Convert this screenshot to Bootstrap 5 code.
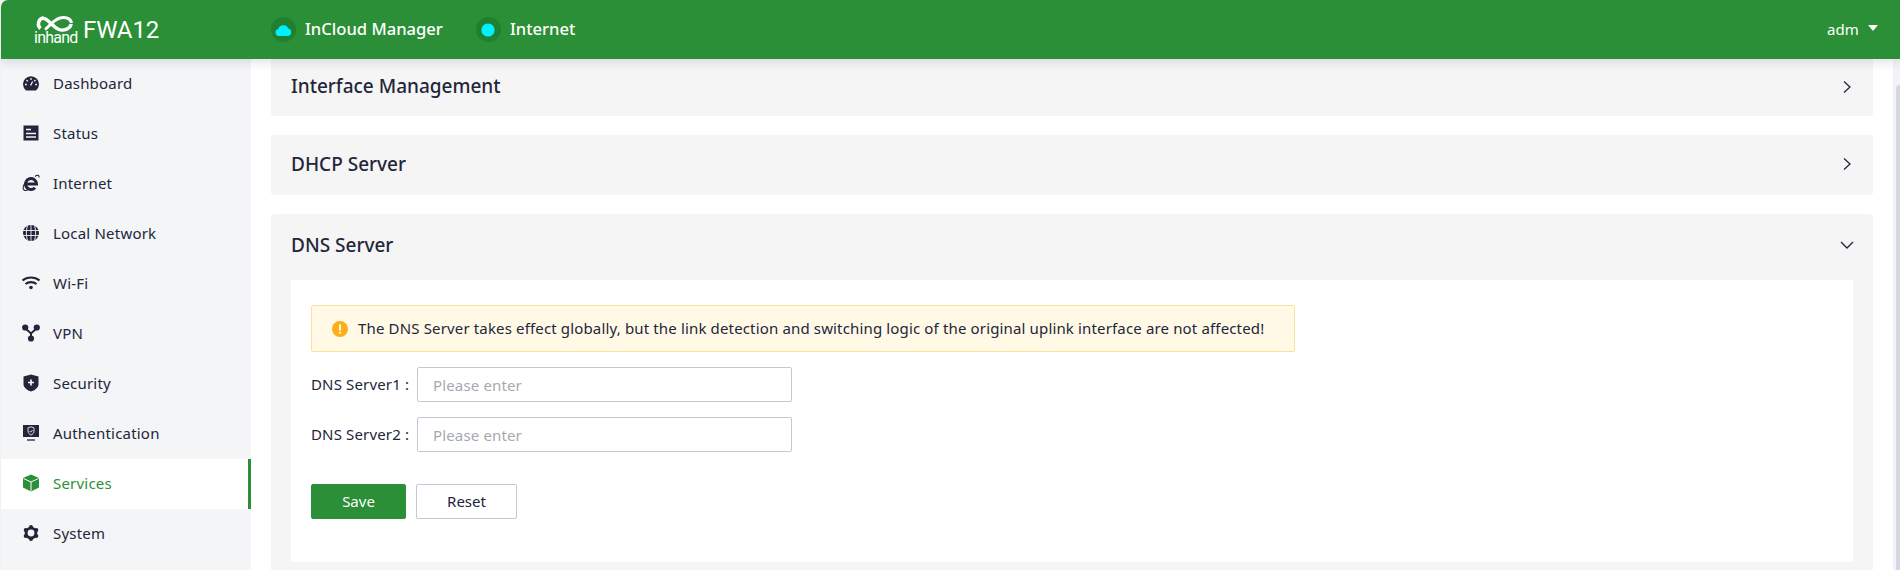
<!DOCTYPE html>
<html lang="en">
<head>
<meta charset="utf-8">
<title>FWA12</title>
<link href="https://cdn.jsdelivr.net/npm/bootstrap@5.3.0/dist/css/bootstrap.min.css" rel="stylesheet">
<style>
html,body{height:570px;overflow:hidden}
body{background:#f1f1f2;font-family:"Noto Sans","Open Sans",sans-serif;font-size:15px;letter-spacing:.15px;color:#23263a}
.app-shell{margin-left:1px;height:570px;background:#fff;border-top-left-radius:7px;overflow:hidden}
.top-bar{height:59px;padding:0;background:#2a8f36;color:#fff;box-shadow:0 2px 10px rgba(40,40,60,.16);position:relative;z-index:2;flex-wrap:nowrap}
.brand-area{width:270px;padding-left:33px}
.logo-mark{width:43px}
.logo-word{display:block;font:400 16px/12px "Roboto",sans-serif;letter-spacing:-.75px;margin-top:-2px;white-space:nowrap}
.model-name{font:400 24px/1 "Roboto",sans-serif;margin-left:6px;letter-spacing:-.1px}
.state-dot{width:25px;height:25px;border-radius:50%;background:#1f8030}
.state-text{font-size:16.6px;font-weight:500;margin-left:9px;margin-right:33px;letter-spacing:0}
.user-menu{margin-right:22px;font-size:15px;color:#fff}
.user-caret{width:0;height:0;border:5px solid transparent;border-top:6px solid #fff;border-bottom:0;margin-left:9px;margin-top:-3px}
.body-row{height:511px}
.side-menu{width:250px;background:#f4f5f7;flex:none}
.side-menu .nav-link{height:50px;padding:0 0 2px 52px;color:#23263a;font-size:15px;letter-spacing:.2px;position:relative}
.side-menu .nav-link.active{background:#fff;color:#2a8f36;border-right:3px solid #2a8f36}
.side-icon{position:absolute;left:21px;top:50%;width:18px;height:18px;margin-top:-10px;fill:#23263a}
.nav-link.active .side-icon{fill:#2a8f36}
.content-area{padding:0 20px}
.fold-panel{background:#f5f5f5;border-radius:3px}
.fold-head{height:60px;padding:0 20px 2px;font-size:19px;font-weight:500;letter-spacing:0}
.fold-first{height:57px;margin-bottom:19px}
.fold-first .fold-head{height:57px}
.fold-second{margin-bottom:19px}
.fold-open{height:360px}
.fold-open .fold-head{height:66px;padding-bottom:4px}
.fold-arrow{width:14px;height:14px;stroke:#23263a;fill:none;stroke-width:1.3;margin-right:-1px}
.fold-body{margin:0 20px;height:282px;background:#fff;padding:25px 20px}
.warn-box{width:984px;height:47px;padding:0 0 0 20px;margin:0 0 15px;background:#fff9e6;border:1px solid #fbe29c;border-radius:2px;color:#23263a;font-size:15px}
.warn-icon{width:16px;height:16px;margin-right:10px;flex:none}
.field-row{height:35px;margin-bottom:15px}
.field-label{width:106px;flex:none}
.field-input{width:375px;height:35px;padding:0 15px;font-size:15px;letter-spacing:.15px;border:1px solid #c4c8d6;border-radius:2px;color:#23263a}
.field-input::placeholder{color:#a6a9b1}
.action-row{margin-top:32px;gap:10px}
.btn-save,.btn-reset{height:35px;padding:0;font-size:15px;border-radius:2px}
.btn-save{width:95px;background:#2a8f36;border:1px solid #2a8f36;color:#fff}
.btn-reset{width:101px;background:#fff;border:1px solid #c4c8d6;color:#23263a}
.scroll-rail{width:7px;flex:none;background:#f2f3f7;padding:26px 0 0 3px}
.scroll-thumb{height:100%;background:#d5d7e3;border-top-left-radius:4px}
</style>
</head>
<body>
<div class="app-shell d-flex flex-column">
  <nav class="navbar top-bar d-flex align-items-center">
    <div class="brand-area d-flex align-items-center">
      <div class="logo-mark">
        <svg width="43" height="19" viewBox="0 0 43 19" class="d-block"><path d="M9 3C4 4 3 11 6.500 13.500" fill="none" stroke="#fff" stroke-width="3.400"/><path d="M8 3C14 3 18 11 24 14C30 17 37 13 37 9" fill="none" stroke="#fff" stroke-width="3.400"/><path d="M11 14.500C15 12 19 5 26 3C32 1.500 37 4 37.500 8" fill="none" stroke="#fff" stroke-width="3"/></svg>
        <span class="logo-word">inhand</span>
      </div>
      <span class="model-name">FWA12</span>
    </div>
    <div class="d-flex align-items-center flex-grow-1">
      <span class="state-dot d-flex align-items-center justify-content-center">
        <svg width="17" height="12" viewBox="0 0 17 12"><path d="M4 12A3.600 3.600 0 0 1 3.300 4.900A5.400 5.400 0 0 1 13.400 4.600A3.800 3.800 0 0 1 13 12Z" fill="#00f0ff"/></svg>
      </span>
      <span class="state-text">InCloud Manager</span>
      <span class="state-dot d-flex align-items-center justify-content-center">
        <svg width="14" height="14" viewBox="0 0 14 14"><circle cx="7" cy="7" r="6.600" fill="#00f0ff"/></svg>
      </span>
      <span class="state-text">Internet</span>
    </div>
    <div class="user-menu d-flex align-items-center"><span>adm</span><span class="user-caret"></span></div>
  </nav>
  <div class="body-row d-flex">
    <aside class="side-menu">
      <nav class="nav flex-column">
        <a class="nav-link d-flex align-items-center" href="#">
          <svg class="side-icon" viewBox="0 0 18 18"><path d="M4 16.500A8 8 0 1 1 14 16.500Z"/><path d="M9 4v2M4.500 6l1.300 1.300M13.500 6l-1.300 1.300M3 10.500h1.800M15 10.500h-1.800M8.600 11.500l2-4" stroke="#f4f5f7" stroke-width="1.300" fill="none"/></svg>Dashboard</a>
        <a class="nav-link d-flex align-items-center" href="#">
          <svg class="side-icon" viewBox="0 0 18 18"><rect x="1.500" y="1.500" width="15" height="15"/><path d="M4 5.500h5M4 9.500h10M4 13h10" stroke="#f4f5f7" stroke-width="1.600"/></svg>Status</a>
        <a class="nav-link d-flex align-items-center" href="#">
          <svg class="side-icon" viewBox="0 0 18 18"><path d="M5 10h9.500A5.500 5.500 0 1 0 13 13.800" fill="none" stroke="#23263a" stroke-width="3"/><path d="M13 2.500C15 .8 17.500 .8 17 3.500M4 7.500C1 11 .5 15 2 16C3.500 17 6 16 8 14.500" fill="none" stroke="#23263a" stroke-width="1.100"/></svg>Internet</a>
        <a class="nav-link d-flex align-items-center" href="#">
          <svg class="side-icon" viewBox="0 0 18 18"><circle cx="9" cy="9" r="8"/><path d="M1 6.500h16M1 11.500h16M9 1v16M5.500 1.500C4 6 4 12 5.500 16.500M12.500 1.500C14 6 14 12 12.500 16.500" stroke="#f4f5f7" stroke-width=".9" fill="none"/></svg>Local Network</a>
        <a class="nav-link d-flex align-items-center" href="#">
          <svg class="side-icon" viewBox="0 0 18 18"><path d="M.5 6.500C5 2.500 13 2.500 17.500 6.500M3.500 10C6.500 7.500 11.500 7.500 14.500 10" fill="none" stroke="#23263a" stroke-width="2.200"/><circle cx="9" cy="13.500" r="1.800"/></svg>Wi-Fi</a>
        <a class="nav-link d-flex align-items-center" href="#">
          <svg class="side-icon" viewBox="0 0 18 18"><path d="M3 4L9 9.500L15 4M9 9.500V15" stroke="#23263a" stroke-width="2" fill="none"/><circle cx="3.200" cy="3.500" r="3.100"/><circle cx="14.800" cy="3.500" r="3.100"/><circle cx="9" cy="14.500" r="3.100"/></svg>VPN</a>
        <a class="nav-link d-flex align-items-center" href="#">
          <svg class="side-icon" viewBox="0 0 18 18"><path d="M9 .5L16.500 2.500V10.500C16.500 13.500 12.500 16.500 9 17.500C5.500 16.500 1.500 13.500 1.500 10.500V2.500Z"/><path d="M9 5.500v6M6 8.500h6" stroke="#f4f5f7" stroke-width="1.700"/></svg>Security</a>
        <a class="nav-link d-flex align-items-center" href="#">
          <svg class="side-icon" viewBox="0 0 18 18"><rect x="1" y="1" width="16" height="12"/><path d="M5 16h8" stroke="#23263a" stroke-width="1.300"/><path d="M9 2.800L12 3.800V7C12 9 10.500 10.500 9 11C7.500 10.500 6 9 6 7V3.800Z" fill="none" stroke="#e8e9ee" stroke-width=".9"/><path d="M7.500 7l1.200 1.200L10.500 6" fill="none" stroke="#e8e9ee" stroke-width=".9"/></svg>Authentication</a>
        <a class="nav-link active d-flex align-items-center" href="#">
          <svg class="side-icon" viewBox="0 0 18 18"><path d="M9 .5L17 4V13.500L9 17.500L1 13.500V4Z"/><path d="M1.500 4.500L9 8L16.500 4.500M9 8V17" stroke="#fff" stroke-width="1" fill="none"/></svg>Services</a>
        <a class="nav-link d-flex align-items-center" href="#">
          <svg class="side-icon" viewBox="0 0 18 18"><circle cx="9" cy="9" r="6.300"/><circle cx="9" cy="2.900" r="2"/><circle cx="9" cy="15.100" r="2"/><circle cx="3.700" cy="5.900" r="2"/><circle cx="14.300" cy="5.900" r="2"/><circle cx="3.700" cy="12.100" r="2"/><circle cx="14.300" cy="12.100" r="2"/><circle cx="9" cy="9" r="3.400" fill="#f4f5f7"/></svg>System</a>
      </nav>
    </aside>
    <main class="content-area flex-grow-1 overflow-hidden">
      <section class="fold-panel fold-first">
        <div class="fold-head d-flex align-items-center justify-content-between"><span>Interface Management</span>
          <svg class="fold-arrow" viewBox="0 0 14 14"><path d="M4 1.500L10 7L4 12.500"/></svg></div>
      </section>
      <section class="fold-panel fold-second">
        <div class="fold-head d-flex align-items-center justify-content-between"><span>DHCP Server</span>
          <svg class="fold-arrow" viewBox="0 0 14 14"><path d="M4 1.500L10 7L4 12.500"/></svg></div>
      </section>
      <section class="fold-panel fold-open">
        <div class="fold-head d-flex align-items-center justify-content-between"><span>DNS Server</span>
          <svg class="fold-arrow" viewBox="0 0 14 14"><path d="M1 4L7 10L13 4"/></svg></div>
        <div class="fold-body">
          <div class="alert warn-box d-flex align-items-center">
            <svg class="warn-icon" viewBox="0 0 16 16"><circle cx="8" cy="8" r="8" fill="#fbaf19"/><rect x="7.100" y="3.500" width="1.800" height="6" fill="#fff"/><rect x="7.100" y="10.800" width="1.800" height="1.800" fill="#fff"/></svg>
            <span>The DNS Server takes effect globally, but the link detection and switching logic of the original uplink interface are not affected!</span>
          </div>
          <div class="field-row d-flex align-items-center">
            <label class="field-label" for="dns1">DNS Server1 :</label>
            <input id="dns1" class="form-control field-input" placeholder="Please enter">
          </div>
          <div class="field-row d-flex align-items-center">
            <label class="field-label" for="dns2">DNS Server2 :</label>
            <input id="dns2" class="form-control field-input" placeholder="Please enter">
          </div>
          <div class="action-row d-flex">
            <button type="button" class="btn btn-save">Save</button>
            <button type="button" class="btn btn-reset">Reset</button>
          </div>
        </div>
      </section>
    </main>
    <div class="scroll-rail"><div class="scroll-thumb"></div></div>
  </div>
</div>
<script src="https://cdn.jsdelivr.net/npm/bootstrap@5.3.0/dist/js/bootstrap.bundle.min.js"></script>
</body>
</html>
